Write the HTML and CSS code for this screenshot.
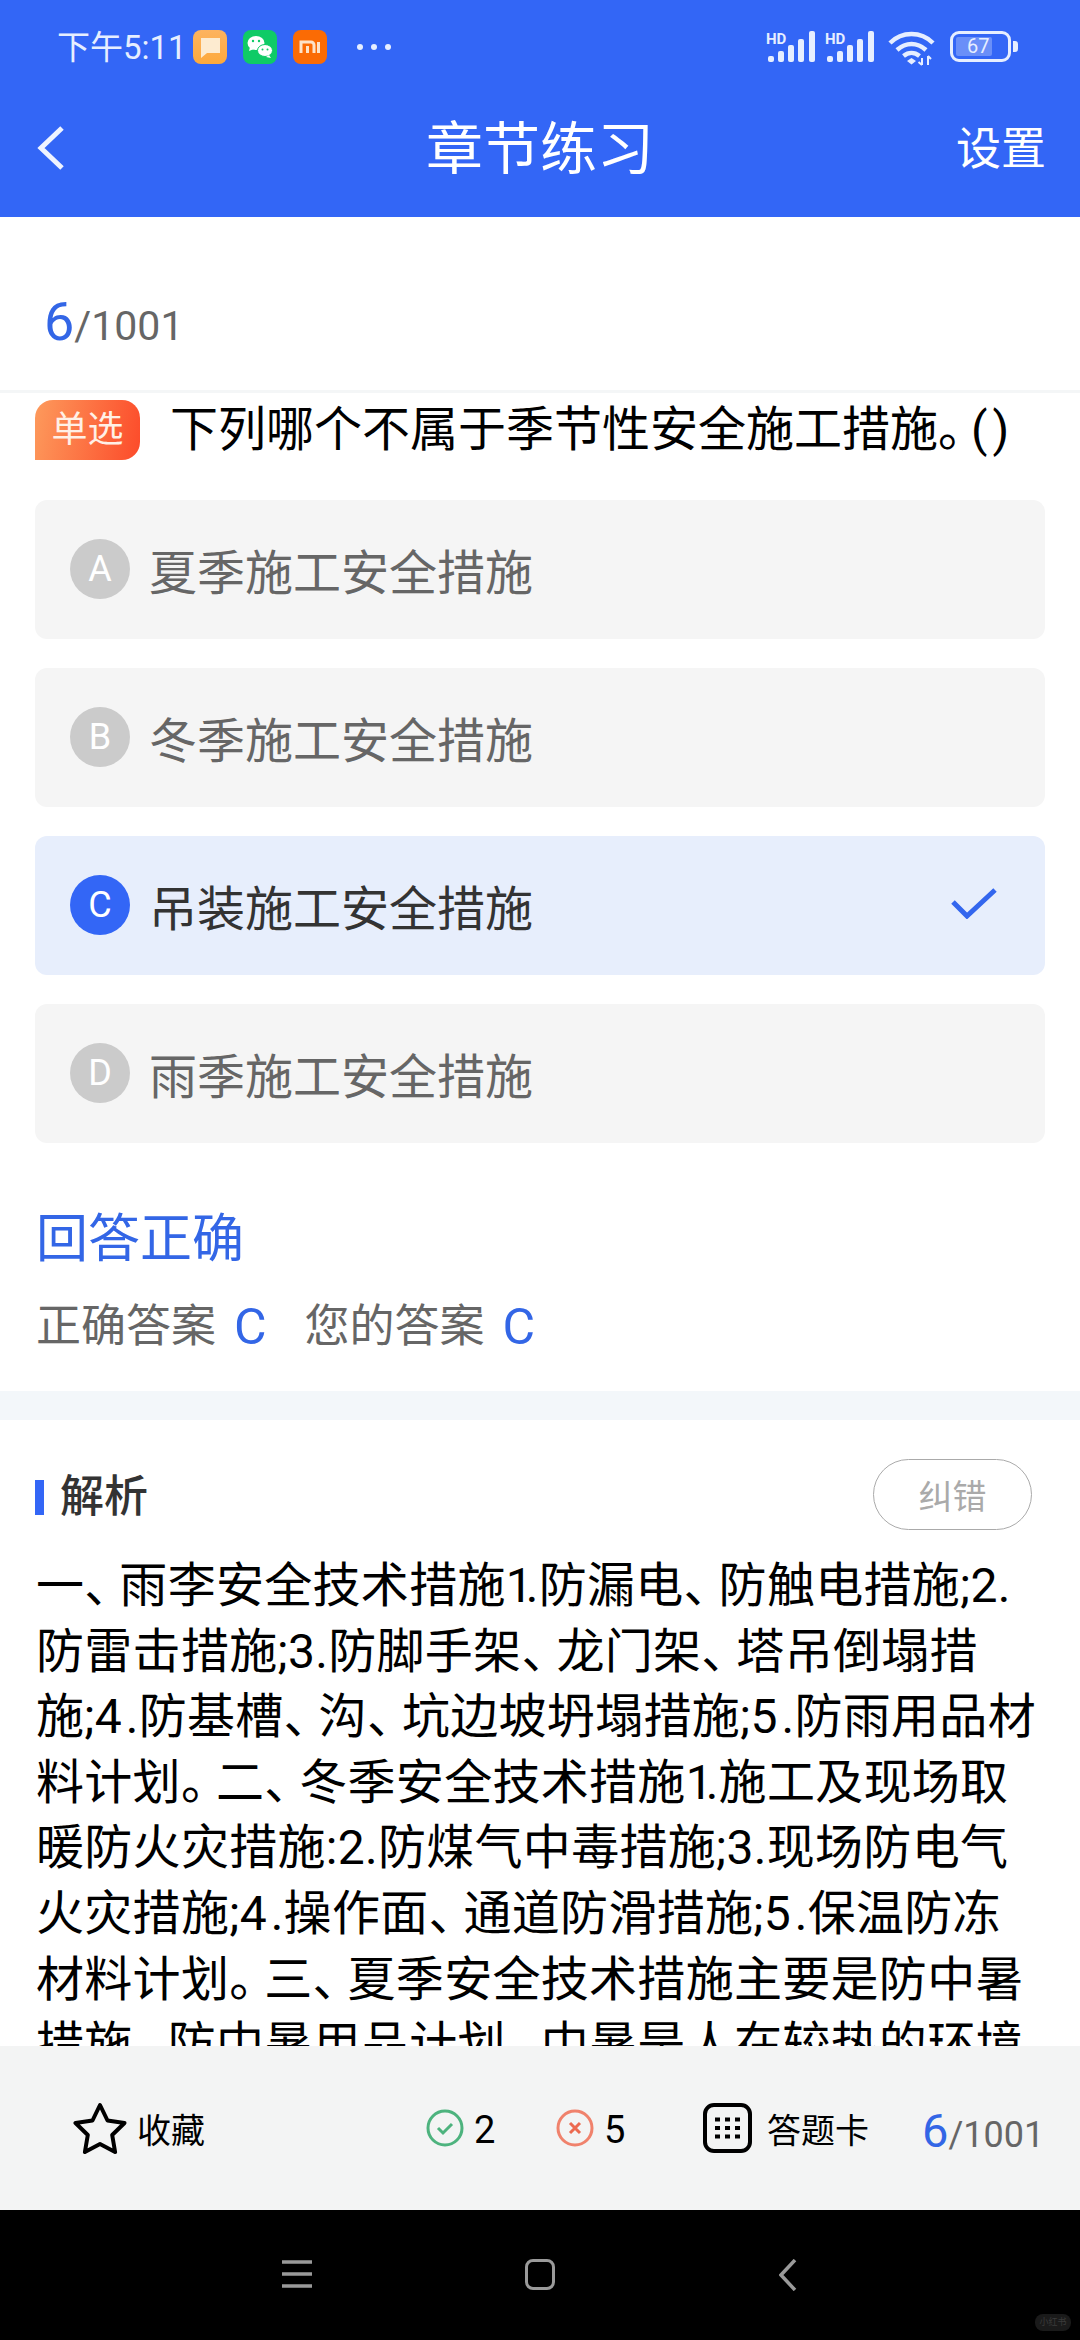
FILE: index.html
```html
<!DOCTYPE html>
<html lang="zh-CN">

<head>
  <meta charset="UTF-8" />
  <title>章节练习</title>
  <link rel="stylesheet" href="styles.css">
</head>

<body>
  <div class="phone">

    <header class="top">
      <div class="status">
        <span class="clock">下午5:11</span>
        <svg class="app-icon" viewBox="0 0 34 34">
          <defs>
            <linearGradient id="noteBg" x1="0" y1="0" x2="0" y2="1">
              <stop offset="0" stop-color="#fdb35f" />
              <stop offset="1" stop-color="#fda93c" />
            </linearGradient>
          </defs>
          <rect width="34" height="34" rx="8" fill="url(#noteBg)" />
          <path d="M8 8h19v15H14l-6 5z" fill="#fdebd0" />
        </svg>
        <svg class="app-icon" viewBox="0 0 34 34">
          <rect width="34" height="34" rx="8" fill="#0fcb66" />
          <ellipse cx="13" cy="13" rx="8.5" ry="7" fill="#fff" />
          <path d="M7 17l-1 4 5-2z" fill="#fff" />
          <ellipse cx="22" cy="20.500" rx="7.500" ry="6" stroke="#0fcb66" stroke-width="1" fill="#fff" />
          <path d="M26 25l2 3-5-1z" fill="#fff" />
          <circle cx="10" cy="11" r="1.200" fill="#0fcb66" />
          <circle cx="16" cy="11" r="1.200" fill="#0fcb66" />
          <circle cx="19.500" cy="19.500" r="1" fill="#0fcb66" />
          <circle cx="24.500" cy="19.500" r="1" fill="#0fcb66" />
        </svg>
        <svg class="app-icon" viewBox="0 0 34 34">
          <rect width="34" height="34" rx="8" fill="#fb6b04" />
          <path d="M8 23V12h10a3 3 0 0 1 3 3v8M14.500 16v7M25.500 12v11" fill="none" stroke="#fde3c8" stroke-width="3" />
        </svg>
        <span class="dots"><i></i><i></i><i></i></span>

        <div class="status-right">
          <svg class="signal" viewBox="0 0 50 32">
            <text x="0" y="14" class="hd">HD</text>
            <rect x="2" y="26" width="6" height="6" rx="2" />
            <rect x="12" y="21" width="6" height="11" rx="2" />
            <rect x="22" y="15" width="6" height="17" rx="2" />
            <rect x="32" y="9" width="6" height="23" rx="2" />
            <rect x="43" y="1" width="6" height="31" rx="2" />
          </svg>
          <svg class="signal" viewBox="0 0 50 32">
            <text x="0" y="14" class="hd">HD</text>
            <rect x="2" y="26" width="6" height="6" rx="2" />
            <rect x="12" y="21" width="6" height="11" rx="2" />
            <rect x="22" y="15" width="6" height="17" rx="2" />
            <rect x="32" y="9" width="6" height="23" rx="2" />
            <rect x="43" y="1" width="6" height="31" rx="2" />
          </svg>
          <svg class="wifi" viewBox="0 0 47 36">
            <path d="M2 13C14 1 33 1 45 13M9 20c9-8 20-8 29 0M15.500 26c5-4 11-4 16 0" fill="none" stroke="#e6eeff" stroke-width="4.500" />
            <path d="M19 31l4.500-3 4.500 3-4.500 3.500z" fill="#e6eeff" />
            <path d="M34 28v7M34 35l-3.500-3M40 35v-9M40 26l3 3" fill="none" stroke="#e6eeff" stroke-width="2" />
          </svg>
          <div class="battery">
            <div class="battery-body"><span class="battery-fill">67</span></div>
            <div class="battery-nub"></div>
          </div>
        </div>
      </div>

      <div class="titlebar">
        <svg class="back" viewBox="0 0 28 46">
          <path d="M25 3L4 23l21 20" fill="none" stroke="#eef3ff" stroke-width="5" />
        </svg>
        <div class="title">章节练习</div>
        <div class="settings">设置</div>
      </div>
    </header>

    <div class="progress">
      <span class="num">6</span><span class="total">/1001</span>
    </div>

    <main class="content">
      <div class="question">
        <span class="badge">单选</span>
        <span class="q-text">下列哪个不属于季节性安全施工措施<span class="q-stop">。</span><span class="q-paren">(</span>)</span>
      </div>

      <div class="options">
        <div class="option"><span class="letter">A</span>夏季施工安全措施</div>
        <div class="option"><span class="letter">B</span>冬季施工安全措施</div>
        <div class="option selected">
          <span class="letter">C</span>吊装施工安全措施
          <svg class="tick" viewBox="0 0 46 32">
            <path d="M2 15l14 14L44 3" fill="none" stroke="#3366ee" stroke-width="5" />
          </svg>
        </div>
        <div class="option"><span class="letter">D</span>雨季施工安全措施</div>
      </div>

      <div class="result">回答正确</div>
      <div class="answers">
        <span>正确答案</span><span class="answer-val">C</span>
        <span>您的答案</span><span class="answer-val">C</span>
      </div>

      <div class="divider"></div>

      <div class="analysis-head">
        <div class="analysis-title">解析</div>
        <button class="report">纠错</button>
      </div>
      <p class="analysis">一<span class="pn">、</span>雨李安全技术措施<span class="one">1</span>.防漏电<span class="pn">、</span>防触电措施;2.<br>防雷击措施;3.防脚手架<span class="pn">、</span>龙门架<span class="pn">、</span>塔吊倒塌措<br>施;<span class="wide">4</span>.防基槽<span class="pn">、</span>沟<span class="pn">、</span>坑边坡坍塌措施;<span class="wide">5</span>.防雨用品材<br>料计划<span class="pn">。</span>二<span class="pn">、</span>冬季安全技术措施<span class="one">1</span>.施工及现场取<br>暖防火灾措施:2.防煤气中毒措施;3.现场防电气<br>火灾措施;<span class="wide">4</span>.操作面<span class="pn">、</span>通道防滑措施;<span class="wide">5</span>.保温防冻<br>材料计划<span class="pn">。</span>三<span class="pn">、</span>夏季安全技术措施主要是防中暑<br>措施<span class="pn">。</span>防中暑用品计划<span class="pn">。</span>中暑是人在较热的环境</p>
    </main>

    <div class="bottombar">
      <div class="fav">
        <svg class="star" viewBox="0 0 54 52">
          <path d="M27 3l7.500 15.500 17 2.500-12.300 12 2.900 17L27 42l-15.100 8 2.900-17L2.500 21l17-2.500z" fill="none" stroke="#000" stroke-width="4" stroke-linejoin="round" />
        </svg>
        <span>收藏</span>
      </div>
      <div class="stat stat-ok">
        <svg class="stat-icon" viewBox="0 0 38 38">
          <circle cx="19" cy="19" r="17" fill="none" stroke="#4db37e" stroke-width="3" />
          <path d="M12 19l5 5 9-9" fill="none" stroke="#4db37e" stroke-width="3" />
        </svg>
        <span>2</span>
      </div>
      <div class="stat stat-bad">
        <svg class="stat-icon" viewBox="0 0 38 38">
          <circle cx="19" cy="19" r="17" fill="none" stroke="#f0826c" stroke-width="3" />
          <path d="M14 14l10 10M24 14L14 24" fill="none" stroke="#ec6a50" stroke-width="3" />
        </svg>
        <span>5</span>
      </div>
      <div class="card-link">
        <svg class="grid-icon" viewBox="0 0 49 50">
          <rect x="2" y="2" width="45" height="46" rx="9" fill="none" stroke="#000" stroke-width="4" />
          <path d="M12 16.500h5M22 16.500h5M32 16.500h5M12 25h5M22 25h5M32 25h5M12 33.500h5M22 33.500h5M32 33.500h5" stroke="#000" stroke-width="4" />
        </svg>
        <span>答题卡</span>
      </div>
      <div class="bar-progress"><span class="num">6</span><span class="total">/1001</span></div>
    </div>

    <nav class="sysnav">
      <svg class="nav-menu" viewBox="0 0 30 30">
        <path d="M0 3h30M0 15h30M0 27h30" stroke="#9a9a9a" stroke-width="3.500" />
      </svg>
      <div class="nav-home"></div>
      <svg class="nav-back" viewBox="0 0 18 32">
        <path d="M16 1L2 16l14 15" fill="none" stroke="#9a9a9a" stroke-width="3.500" />
      </svg>
      <span class="watermark">小红书</span>
    </nav>

  </div>
</body>

</html>
```

FILE: styles.css
```css
* {
  box-sizing: border-box;
}

body {
  margin: 0;
  font-family: Roboto, "Noto Sans CJK SC", sans-serif;
  background: #fff;
}

.phone {
  width: 1080px;
  height: 2340px;
  display: flex;
  flex-direction: column;
  overflow: hidden;
}

/* header */
.top {
  height: 217px;
  flex: none;
  background: #3366f6;
  color: #fff;
}

.status {
  height: 96px;
  padding: 30px 62px 0 57px;
  display: flex;
  align-items: flex-start;
  color: #e6eeff;
}

.clock {
  font-size: 33px;
  line-height: 36px;
  width: 136px;
  white-space: nowrap;
}

.app-icon {
  width: 34px;
  height: 34px;
  margin-right: 16px;
}

.dots {
  display: flex;
  gap: 8px;
  margin: 14px 0 0 14px;
}

.dots i {
  width: 6px;
  height: 6px;
  border-radius: 50%;
  background: #e6eeff;
}

.status-right {
  margin-left: auto;
  display: flex;
  gap: 9px;
}

.signal {
  width: 50px;
  height: 32px;
  fill: #e6eeff;
}

.hd {
  font-family: Roboto, sans-serif;
  font-size: 15px;
  font-weight: 700;
}

.wifi {
  width: 47px;
  height: 36px;
  margin: 0 6px 0 4px;
}

.battery {
  display: flex;
  align-items: center;
  height: 32px;
}

.battery-body {
  width: 61px;
  height: 31px;
  border: 3px solid #e6eeff;
  border-radius: 9px;
  padding: 3px;
}

.battery-fill {
  display: block;
  width: 36px;
  height: 19px;
  background: #6a8ff8;
  border-radius: 2px;
  font-size: 20px;
  line-height: 19px;
  padding-left: 11px;
  white-space: nowrap;
}

.battery-nub {
  width: 5px;
  height: 11px;
  margin-left: 2px;
  background: #e6eeff;
  border-radius: 0 3px 3px 0;
}

.titlebar {
  height: 121px;
  display: grid;
  grid-template-columns: 1fr auto 1fr;
  align-items: center;
  padding: 0 37px 14px;
}

.back {
  width: 28px;
  height: 46px;
  margin-top: -4px;
}

.title {
  font-size: 57px;
  line-height: 70px;
}

.settings {
  font-size: 45px;
  text-align: right;
  margin-right: -3px;
  line-height: 70px;
}

/* progress line */
.progress {
  height: 176px;
  flex: none;
  padding: 75px 0 0 44px;
  border-bottom: 3px solid #f4f6f7;
  color: #666;
  line-height: 60px;
}

.num {
  color: #3366e6;
  font-size: 54px;
}

.total {
  font-size: 41px;
}

/* question */
.content {
  flex: 1;
  min-height: 0;
  overflow: hidden;
}

.question {
  display: flex;
  padding: 7px 0 0 35px;
  height: 107px;
}

.badge {
  width: 105px;
  height: 60px;
  border-radius: 18px 18px 18px 0;
  background: linear-gradient(100deg, #fd9a5c, #fc4b2a);
  color: #fff0e6;
  font-size: 36px;
  line-height: 60px;
  text-align: center;
}

.q-text {
  margin-left: 30px;
  font-size: 48px;
  line-height: 60px;
  color: #000;
  white-space: nowrap;
}

.q-stop {
  letter-spacing: -15px;
}

.q-paren {
  letter-spacing: 5px;
}

.options {
  padding: 0 35px;
  display: flex;
  flex-direction: column;
  gap: 29px;
}

.option {
  height: 139px;
  border-radius: 12px;
  background: #f5f5f5;
  padding: 0 35px 2px;
  display: flex;
  align-items: center;
  font-size: 48px;
  color: #666;
}

.letter {
  width: 60px;
  height: 60px;
  margin-right: 19px;
  border-radius: 50%;
  background: #cbcbcb;
  color: #fff;
  font-size: 36px;
  line-height: 60px;
  text-align: center;
}

.selected {
  background: #e7eefc;
  color: #333;
}

.selected .letter {
  background: #3366f6;
}

.tick {
  width: 46px;
  height: 32px;
  margin-left: auto;
  margin-right: 13px;
  margin-bottom: 4px;
}

.result {
  margin: 62px 0 0 36px;
  font-size: 52px;
  line-height: 70px;
  color: #3366e6;
}

.answers {
  margin: 22px 0 0 36px;
  display: flex;
  font-size: 45px;
  line-height: 60px;
  color: #666;
}

.answer-val {
  color: #3366e6;
  font-size: 50px;
  margin: 0 38px 0 18px;
}

.divider {
  height: 29px;
  margin-top: 34px;
  background: #f3f7fa;
}

/* analysis */
.analysis-head {
  display: flex;
  justify-content: space-between;
  align-items: center;
  padding: 39px 48px 0 35px;
}

.analysis-title {
  border-left: 9px solid #3366f6;
  padding-left: 16px;
  margin-top: 6px;
  font-size: 44px;
  line-height: 35px;
  font-weight: 500;
  color: #333;
}

.report {
  width: 159px;
  height: 71px;
  border: 1.500px solid #aaa;
  border-radius: 36px;
  background: #fff;
  font-family: inherit;
  font-size: 34px;
  color: #aaa;
  padding: 0;
}

.analysis {
  margin: 23px 0 0 36px;
  font-size: 48px;
  letter-spacing: 0.300px;
  line-height: 65.6px;
  color: #000;
  white-space: nowrap;
}

/* the app's font sets these tighter or wider than ours */
.pn {
  letter-spacing: -13px;
}

.one {
  letter-spacing: -7px;
}

.wide {
  letter-spacing: 4px;
}

/* bottom bar */
.bottombar {
  height: 164px;
  flex: none;
  background: #f3f4f4;
  display: flex;
  align-items: center;
  padding: 0 0 0 73px;
  font-size: 34px;
  color: #000;
}

.fav,
.stat,
.card-link {
  display: flex;
  align-items: center;
}

.fav {
  width: 353px;
  gap: 10px;
}

.star {
  width: 54px;
  height: 52px;
}

.stat {
  font-size: 38px;
  gap: 10px;
}

.stat span {
  padding-top: 3px;
}

.stat-ok {
  width: 130px;
}

.stat-bad {
  width: 147px;
}

.stat-icon {
  width: 38px;
  height: 38px;
}

.card-link {
  width: 219px;
  gap: 15px;
}

.grid-icon {
  width: 49px;
  height: 50px;
}

.bar-progress {
  color: #666;
  line-height: 50px;
  padding-top: 10px;
}

.bar-progress .num {
  font-size: 47px;
}

.bar-progress .total {
  font-size: 36px;
}

/* android nav */
.sysnav {
  position: relative;
  height: 130px;
  flex: none;
  background: #000;
  display: flex;
  align-items: flex-start;
  padding: 49px 0 0 282px;
}

.nav-menu {
  width: 30px;
  height: 30px;
}

.nav-home {
  width: 30px;
  height: 31px;
  margin-left: 213px;
  border: 3.500px solid #9a9a9a;
  border-radius: 8px;
}

.nav-back {
  width: 18px;
  height: 32px;
  margin-left: 224px;
}

.watermark {
  position: absolute;
  right: 9px;
  bottom: 9px;
  width: 36px;
  height: 17px;
  border-radius: 8px;
  background: #1a1a1a;
  color: #3a3a3a;
  font-size: 9px;
  line-height: 17px;
  text-align: center;
  white-space: nowrap;
}
```
